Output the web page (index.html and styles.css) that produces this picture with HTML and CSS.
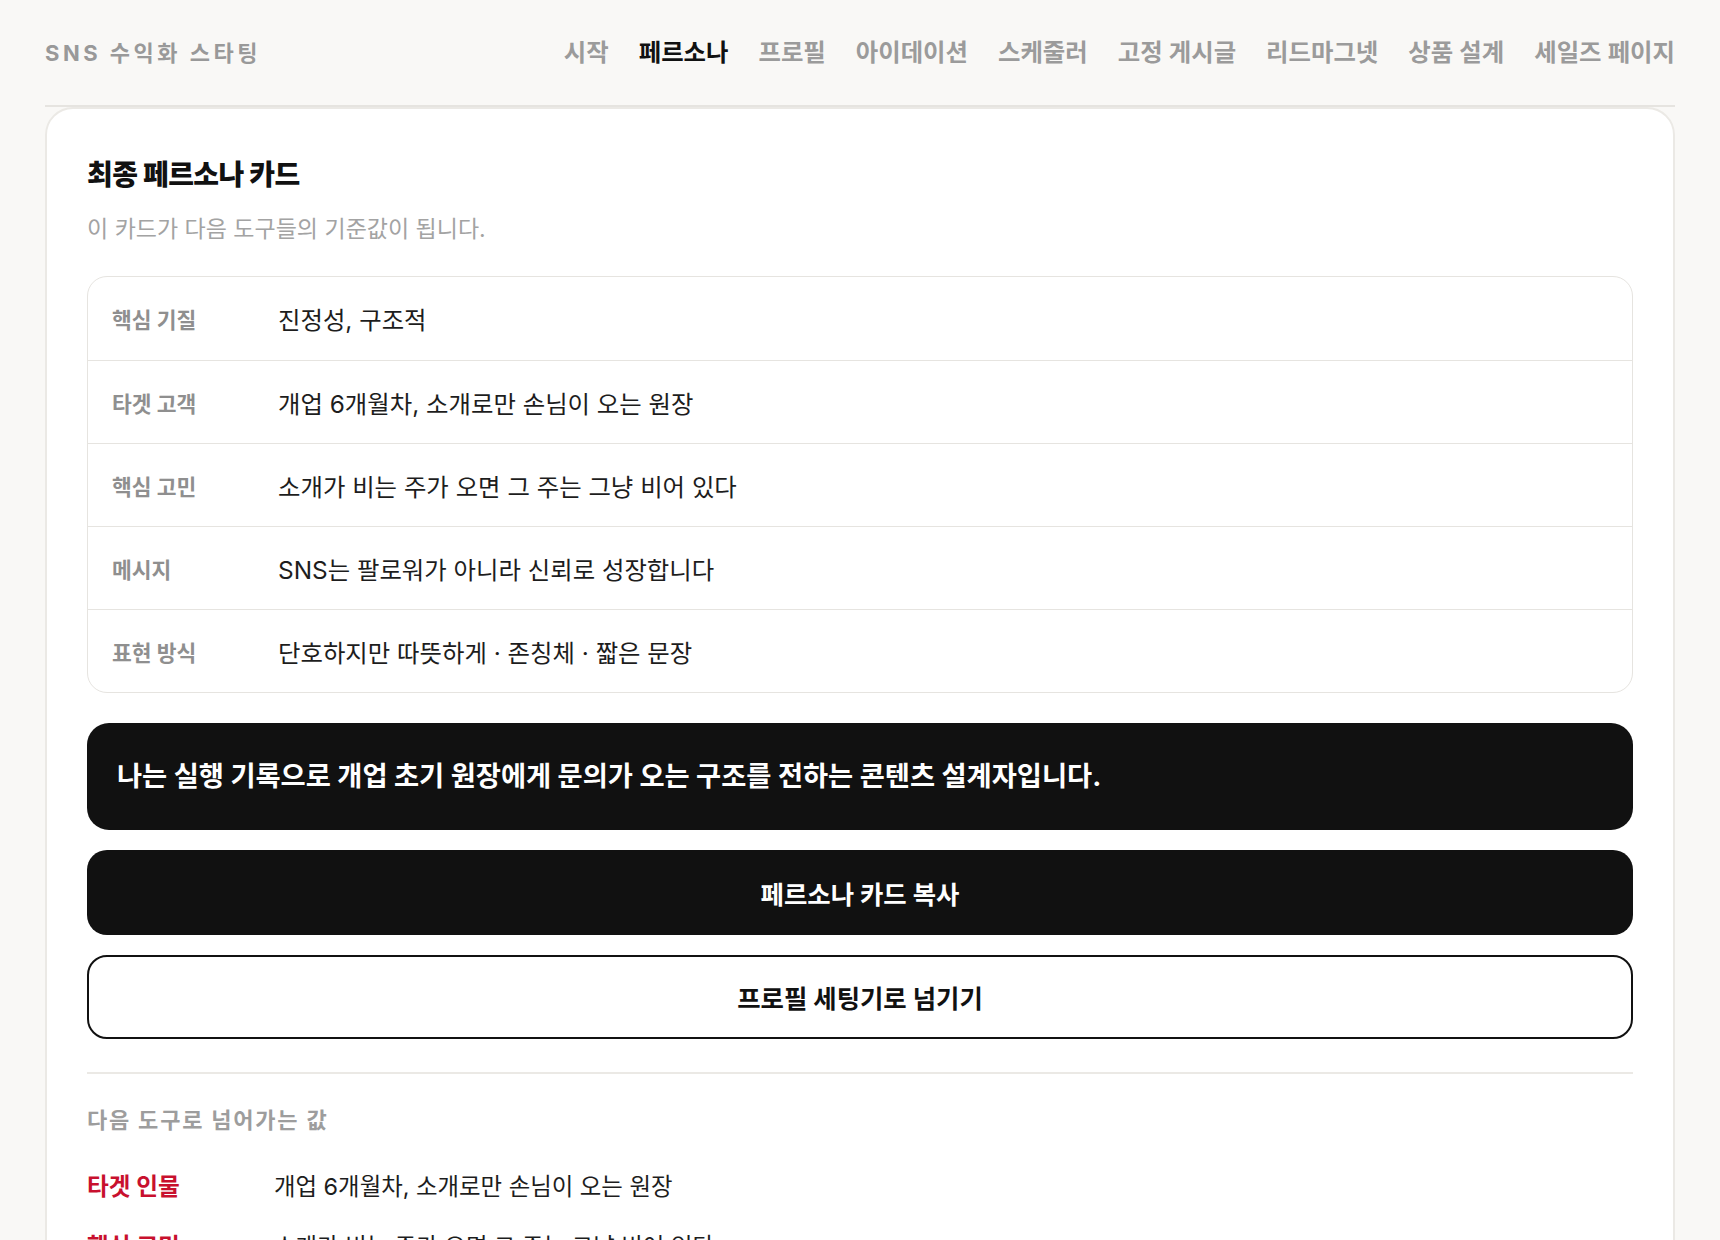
FILE: index.html
```html
<!DOCTYPE html>
<html lang="ko">
<head>
    <meta charset="UTF-8">
    <meta name="viewport" content="width=device-width, initial-scale=1.0">
    <title>최종 페르소나 카드 - SNS 수익화 스타팅</title>
    <link rel="stylesheet" href="styles.css">
</head>
<body>
    <div class="page">
        <header class="topbar">
            <div class="logo">SNS 수익화 스타팅</div>
            <nav class="nav">
                <a href="#" class="nav-item">시작</a>
                <a href="#" class="nav-item active">페르소나</a>
                <a href="#" class="nav-item">프로필</a>
                <a href="#" class="nav-item">아이데이션</a>
                <a href="#" class="nav-item">스케줄러</a>
                <a href="#" class="nav-item">고정 게시글</a>
                <a href="#" class="nav-item">리드마그넷</a>
                <a href="#" class="nav-item">상품 설계</a>
                <a href="#" class="nav-item">세일즈 페이지</a>
            </nav>
        </header>

        <main class="card">
            <h1 class="card-title">최종 페르소나 카드</h1>
            <p class="card-desc">이 카드가 다음 도구들의 기준값이 됩니다.</p>

            <div class="persona-table">
                <div class="persona-row">
                    <div class="persona-label">핵심 기질</div>
                    <div class="persona-value">진정성, 구조적</div>
                </div>
                <div class="persona-row">
                    <div class="persona-label">타겟 고객</div>
                    <div class="persona-value">개업 6개월차, 소개로만 손님이 오는 원장</div>
                </div>
                <div class="persona-row">
                    <div class="persona-label">핵심 고민</div>
                    <div class="persona-value">소개가 비는 주가 오면 그 주는 그냥 비어 있다</div>
                </div>
                <div class="persona-row">
                    <div class="persona-label">메시지</div>
                    <div class="persona-value">SNS는 팔로워가 아니라 신뢰로 성장합니다</div>
                </div>
                <div class="persona-row">
                    <div class="persona-label">표현 방식</div>
                    <div class="persona-value">단호하지만 따뜻하게 · 존칭체 · 짧은 문장</div>
                </div>
            </div>

            <div class="statement">나는 실행 기록으로 개업 초기 원장에게 문의가 오는 구조를 전하는 콘텐츠 설계자입니다.</div>

            <button class="btn btn-dark">페르소나 카드 복사</button>
            <button class="btn btn-outline">프로필 세팅기로 넘기기</button>

            <hr class="divider">

            <h2 class="handoff-title">다음 도구로 넘어가는 값</h2>
            <div class="handoff-list">
                <div class="handoff-row">
                    <div class="handoff-label">타겟 인물</div>
                    <div class="handoff-value">개업 6개월차, 소개로만 손님이 오는 원장</div>
                </div>
                <div class="handoff-row">
                    <div class="handoff-label">핵심 고민</div>
                    <div class="handoff-value">소개가 비는 주가 오면 그 주는 그냥 비어 있다</div>
                </div>
                <div class="handoff-row">
                    <div class="handoff-label">메시지</div>
                    <div class="handoff-value">SNS는 팔로워가 아니라 신뢰로 성장합니다</div>
                </div>
                <div class="handoff-row">
                    <div class="handoff-label">표현 방식</div>
                    <div class="handoff-value">단호하지만 따뜻하게 · 존칭체 · 짧은 문장</div>
                </div>
            </div>
        </main>
    </div>
</body>
</html>
```

FILE: styles.css
```css
/* 기본 */
* {
    margin: 0;
    padding: 0;
    box-sizing: border-box;
}

body {
    background-color: #f9f8f6;
    font-family: "Inter", "Noto Sans CJK KR", sans-serif;
    color: #1a1a1a;
}

.page {
    padding: 0 45px 60px;
}

/* 상단 바 */
.topbar {
    height: 107px;
    padding-bottom: 4px;
    display: flex;
    justify-content: space-between;
    align-items: center;
    border-bottom: 2px solid #e6e4e0;
}

.logo {
    font-size: 22px;
    font-weight: 700;
    letter-spacing: 3.5px;
    color: #999;
}

.nav {
    display: flex;
    gap: 30px;
}

.nav-item {
    font-size: 24.4px;
    font-weight: 600;
    color: #9b9b9b;
    text-decoration: none;
}

.nav-item.active {
    color: #111;
    font-weight: 700;
}

/* 카드 */
.card {
    background-color: #fff;
    border: 2px solid #ebe9e5;
    border-radius: 28px;
    padding: 49px 40px 40px;
}

.card-title {
    font-size: 28px;
    font-weight: 800;
    line-height: 34px;
    letter-spacing: -0.02em;
    color: #111;
}

.card-desc {
    font-size: 23px;
    line-height: 30px;
    color: #a3a3a3;
    margin-top: 22px;
}

/* 페르소나 표 */
.persona-table {
    margin-top: 32px;
    border: 1px solid #e6e4e0;
    border-radius: 20px;
}

.persona-row {
    display: grid;
    grid-template-columns: 166px 1fr;
    align-items: center;
    height: 83px;
    padding: 0 24px;
    border-top: 1px solid #e6e4e0;
}

.persona-row:first-child {
    border-top: none;
}

.persona-label {
    font-size: 21.5px;
    font-weight: 700;
    color: #8f8f8f;
}

.persona-value {
    font-size: 24.4px;
    color: #1d1d1d;
}

/* 한 줄 정의 */
.statement {
    margin-top: 30px;
    background-color: #111;
    color: #fff;
    border-radius: 22px;
    padding: 34px 30px;
    font-size: 27.3px;
    line-height: 39px;
    font-weight: 700;
}

.btn {
    display: block;
    width: 100%;
    margin-top: 20px;
    height: 85px;
    border-radius: 20px;
    font-family: inherit;
    font-size: 25.4px;
    font-weight: 700;
    cursor: pointer;
}

.btn-dark {
    background-color: #111;
    color: #fff;
    border: none;
}

.btn-outline {
    height: 84px;
    background-color: #fff;
    color: #111;
    border: 2px solid #111;
}

.divider {
    border: none;
    border-top: 2px solid #ebe9e5;
    margin-top: 33px;
}

/* 넘어가는 값 */
.handoff-title {
    margin-top: 31px;
    font-size: 22px;
    line-height: 30px;
    font-weight: 700;
    letter-spacing: 1.8px;
    color: #9d9d9d;
}

.handoff-list {
    margin-top: 36px;
    display: flex;
    flex-direction: column;
    gap: 28px;
}

.handoff-row {
    display: grid;
    grid-template-columns: 187px 1fr;
    align-items: center;
    line-height: 32px;
}

.handoff-label {
    font-size: 23.7px;
    font-weight: 700;
    color: #c8102e;
}

.handoff-value {
    font-size: 23.4px;
    color: #1d1d1d;
}
```
